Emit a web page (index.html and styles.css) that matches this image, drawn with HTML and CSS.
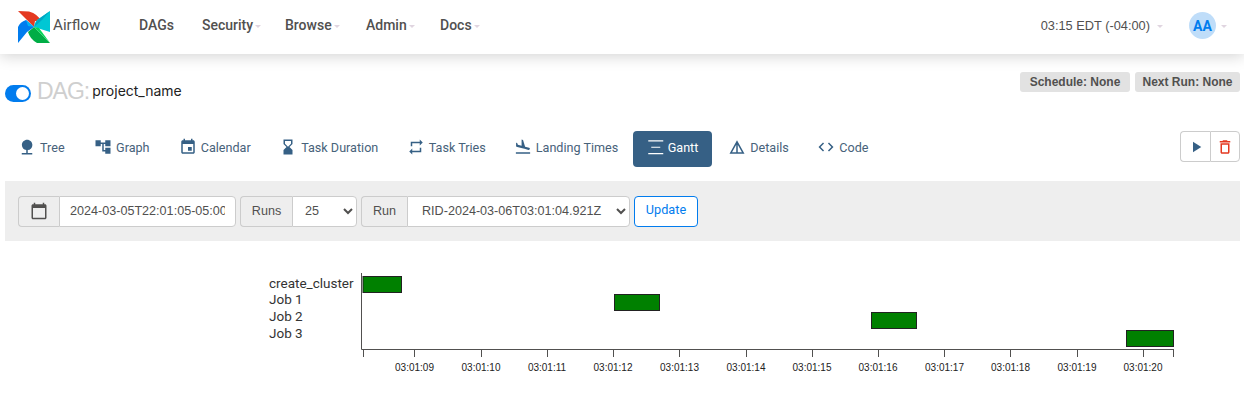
FILE: index.html
```html
<!DOCTYPE html>
<html lang="en">
<head>
<meta charset="utf-8">
<title>Airflow - Gantt</title>
<link rel="stylesheet" href="styles.css">
</head>
<body>
<header class="navbar">
  <a class="brand">
    <svg class="logo" viewBox="0 0 32 32" width="32" height="32" aria-hidden="true">
      <path fill="#e43921" d="M0 0 L11 .5 Q20 3 24 11 L17 10 L16 16 Z"/>
      <path fill="#00c7d4" d="M32 0 L32 21 L16 16 Q17 9 22 7 Z"/>
      <path fill="#00a7c4" d="M32 0 L22 7 Q18 10 16 16 L24 9 Z"/>
      <path fill="#00ad46" d="M32 32 L19 32 Q12 28 10 21 L16 16 Z"/>
      <path fill="#04d659" d="M32 32 L16 16 L21 17 Z"/>
      <path fill="#017cee" d="M0 32 L0 16 Q2 11 8 9 L16 16 L9 21 Z"/>
      <path fill="#00b4f5" d="M8 9 L16 16 L10 15 Z"/>
    </svg>
    <span class="brand-name">Airflow</span>
  </a>
  <nav class="menu">
    <a class="menu-item menu-dags">DAGs</a>
    <a class="menu-item menu-security">Security<i class="caret"></i></a>
    <a class="menu-item menu-browse">Browse<i class="caret"></i></a>
    <a class="menu-item menu-admin">Admin<i class="caret"></i></a>
    <a class="menu-item">Docs<i class="caret"></i></a>
  </nav>
  <div class="nav-right">
    <span class="clock">03:15 EDT (-04:00)<i class="caret clock-caret"></i></span>
    <span class="avatar">AA</span><i class="caret avatar-caret"></i>
  </div>
</header>

<main class="content">
  <section class="title-row">
    <div class="title">
      <span class="toggle"><span class="knob"></span></span>
      <span class="dag-label">DAG:</span>
      <span class="dag-name">project_name</span>
    </div>
    <div class="badges">
      <span class="badge badge-schedule">Schedule: None</span>
      <span class="badge badge-next">Next Run: None</span>
    </div>
  </section>

  <section class="tabs-row">
    <nav class="tabs">
      <a class="tab"><svg class="ico" viewBox="0 0 24 24"><path d="M13 16.120c3.470-.41 6.170-3.360 6.170-6.950 0-3.870-3.130-7-7-7s-7 3.130-7 7c0 3.470 2.520 6.340 5.830 6.890V20H5v2h14v-2h-6v-3.880z"/></svg>Tree</a>
      <a class="tab tab-graph"><svg class="ico" viewBox="0 0 24 24"><path d="M22 11V3h-7v3H9V3H2v8h7V8h2v10h4v3h7v-8h-7v3h-2V8h2v3z"/></svg>Graph</a>
      <a class="tab tab-cal"><svg class="ico" viewBox="0 0 24 24"><path d="M17 12h-5v5h5v-5zM16 1v2H8V1H6v2H5c-1.110 0-1.990.9-1.990 2L3 19c0 1.100.89 2 2 2h14c1.100 0 2-.9 2-2V5c0-1.100-.9-2-2-2h-1V1h-2zm3 18H5V8h14v11z"/></svg>Calendar</a>
      <a class="tab"><svg class="ico" viewBox="0 0 24 24"><path d="M18 22l-.01-6L14 12l3.990-4.010L18 2H6v6l4 4-4 3.990V22h12zM8 7.500V4h8v3.500l-4 4-4-4z"/></svg>Task Duration</a>
      <a class="tab"><svg class="ico" viewBox="0 0 24 24"><path d="M7 7h10v3l4-4-4-4v3H5v6h2V7zm10 10H7v-3l-4 4 4 4v-3h12v-6h-2v4z"/></svg>Task Tries</a>
      <a class="tab tab-land"><svg class="ico" viewBox="0 0 24 24"><path d="M2.500 19h19v2h-19v-2zm7.180-5.730l4.350 1.160 5.310 1.420c.8.210 1.620-.26 1.840-1.060.21-.8-.26-1.620-1.060-1.840l-5.310-1.420-2.760-9.020L10.120 2v8.280L5.150 8.950l-.93-2.320-1.450-.39v5.170l1.600.43 5.310 1.430z"/></svg>Landing Times</a>
      <a class="tab tab-active"><svg class="ico" viewBox="0 0 24 24"><path d="M3 3h20v1.500H3zM7 11.500h12V13H7zM3 20h20v1.500H3z"/></svg>Gantt</a>
      <a class="tab tab-details"><svg class="ico" viewBox="0 0 24 24"><path d="M12 3L2 21h20L12 3zm1 5.920L18.600 19H13V8.920zm-2 0V19H5.400L11 8.920z"/></svg>Details</a>
      <a class="tab"><svg class="ico" viewBox="0 0 24 24"><path d="M9.400 16.600L4.800 12l4.600-4.600L8 6l-6 6 6 6 1.400-1.400zm5.200 0l4.600-4.600-4.600-4.600L16 6l6 6-6 6-1.400-1.400z"/></svg>Code</a>
    </nav>
    <div class="actions">
      <button class="action" type="button"><svg class="ico-action" viewBox="0 0 24 24"><path fill="#366085" d="M8 5v14l11-7z"/></svg></button>
      <button class="action" type="button"><svg class="ico-action" viewBox="0 0 24 24"><path fill="#e43921" d="M6 19c0 1.100.9 2 2 2h8c1.100 0 2-.9 2-2V7H6v12zM8 9h8v10H8V9zm7.500-5l-1-1h-5l-1 1H5v2h14V4h-3.500z"/></svg></button>
    </div>
  </section>

  <form class="toolbar">
    <div class="group">
      <span class="addon addon-cal"><svg class="ico-action" viewBox="0 0 24 24"><path fill="#51504f" d="M20 3h-1V1h-2v2H7V1H5v2H4c-1.100 0-2 .9-2 2v16c0 1.100.9 2 2 2h16c1.100 0 2-.9 2-2V5c0-1.100-.9-2-2-2zm0 18H4V8h16v13z"/></svg></span>
      <input class="field field-date" type="text" value="2024-03-05T22:01:05-05:00">
    </div>
    <div class="group">
      <span class="addon addon-runs">Runs</span>
      <select class="field field-runs"><option>25</option></select>
    </div>
    <div class="group">
      <span class="addon addon-run">Run</span>
      <select class="field field-run"><option>RID-2024-03-06T03:01:04.921Z</option></select>
    </div>
    <button class="update" type="button">Update</button>
  </form>

  <section class="chart">
    <svg class="gantt" width="1244" height="145" viewBox="0 241 1244 145" role="img" aria-label="Gantt chart">
      <g class="row-labels">
        <text x="269" y="288">create_cluster</text>
        <text x="269" y="304">Job 1</text>
        <text x="269" y="321">Job 2</text>
        <text x="269" y="338">Job 3</text>
      </g>
      <g class="axis">
        <path d="M361.500 273V349.500H1173.500"/>
        <path d="M363.500 349v8M414.500 349v8M481.500 349v8M547.500 349v8M613.500 349v8M679.500 349v8M746.500 349v8M812.500 349v8M878.500 349v8M944.500 349v8M1010.500 349v8M1077.500 349v8M1143.500 349v8M1173.500 349v8"/>
      </g>
      <g class="bars">
        <rect x="363" y="276.500" width="38.500" height="16"/>
        <rect x="614.500" y="294.500" width="45" height="16"/>
        <rect x="871.500" y="312.500" width="45" height="16"/>
        <rect x="1126.500" y="330.500" width="47" height="16"/>
      </g>
      <g class="tick-labels">
        <text x="414.500" y="371">03:01:09</text>
        <text x="481" y="371">03:01:10</text>
        <text x="547" y="371">03:01:11</text>
        <text x="613" y="371">03:01:12</text>
        <text x="679.500" y="371">03:01:13</text>
        <text x="746" y="371">03:01:14</text>
        <text x="812" y="371">03:01:15</text>
        <text x="878" y="371">03:01:16</text>
        <text x="944.500" y="371">03:01:17</text>
        <text x="1010.500" y="371">03:01:18</text>
        <text x="1077" y="371">03:01:19</text>
        <text x="1143" y="371">03:01:20</text>
      </g>
    </svg>
  </section>
</main>
</body>
</html>
```
FILE: styles.css
```css
* { box-sizing: border-box; }
html, body { margin: 0; padding: 0; background: #fff; }
body {
  width: 1244px;
  height: 409px;
  overflow: hidden;
  font-family: Roboto, "Liberation Sans", sans-serif;
  color: #51504f;
}
a { color: inherit; text-decoration: none; }

.navbar {
  height: 54px;
  display: flex;
  align-items: center;
  background: #fff;
  box-shadow: 0 2px 14px rgba(0, 0, 0, .18);
  padding: 0 0 4px 18px;
  position: relative;
}
.brand { display: flex; align-items: center; width: 121px; }
.logo { display: block; margin-top: 4px; }
.brand-name { font-size: 15.200px; margin-left: 3px; color: #51504f; }
.menu { display: flex; font-size: 14px; font-weight: 500; }
.menu-item { display: flex; align-items: center; }
.menu-dags { width: 63px; }
.menu-security { width: 83px; }
.menu-browse { width: 81px; }
.menu-admin { width: 74px; }
.caret {
  display: inline-block;
  width: 0;
  height: 0;
  margin-left: 2px;
  margin-top: 2px;
  border-top: 3px solid #e0d5e0;
  border-left: 3px solid transparent;
  border-right: 3px solid transparent;
}
.nav-right { margin-left: auto; display: flex; align-items: center; padding-right: 17px; }
.clock { font-family: "Liberation Sans", sans-serif; font-size: 12.800px; display: flex; align-items: center; }
.clock-caret { margin-left: 7px; }
.avatar {
  width: 27px;
  height: 27px;
  margin-left: 26px;
  margin-top: 1px;
  border-radius: 50%;
  background: #bfddf9;
  color: #017cee;
  font-size: 14px;
  font-weight: 700;
  display: flex;
  align-items: center;
  justify-content: center;
}
.avatar-caret { margin-left: 5px; }

.content { padding: 0 4px 0 5px; }
.title-row { display: flex; justify-content: space-between; align-items: flex-start; height: 77px; padding-top: 18px; }
.title { display: flex; align-items: center; margin-top: 8px; height: 24px; }
.toggle {
  width: 26px;
  height: 17px;
  background: #017cee;
  border-radius: 9px;
  position: relative;
  margin-top: 3px;
}
.knob {
  position: absolute;
  right: 2px;
  top: 2px;
  width: 13px;
  height: 13px;
  background: #fff;
  border-radius: 50%;
}
.dag-label { font-family: "Liberation Sans", sans-serif; font-size: 23px; color: #cfcfcf; margin-left: 6px; margin-top: -2px; letter-spacing: -1px; }
.dag-name { font-family: Inter, Roboto, sans-serif; font-size: 14px; color: #222; margin-left: 3px; margin-top: -4px; }
.badges { display: flex; gap: 5px; }
.badge {
  height: 20px;
  display: flex;
  align-items: center;
  justify-content: center;
  background: #e2e2e2;
  border-radius: 3px;
  font-family: "Liberation Sans", sans-serif;
  font-size: 12px;
  font-weight: 700;
  color: #51504f;
}
.badge-schedule { width: 110px; }
.badge-next { width: 105px; }

.tabs-row { display: flex; justify-content: space-between; align-items: flex-start; height: 50px; }
.tabs { display: flex; gap: 2.500px; font-size: 12.600px; color: #47627a; }
.tab {
  display: flex;
  align-items: center;
  height: 36px;
  padding: 0 13px 4px;
  border-radius: 4px;
  white-space: nowrap;
}
.tab-graph { margin-left: 1px; }
.tab-cal { margin-left: .7px; }
.tab-land { margin-left: -.5px; }
.tab-active { background: #366085; color: #fff; margin-left: -1px; width: 79px; }
.tab-details { margin-left: 1px; }
.ico { width: 18px; height: 18px; margin-right: 4px; fill: #366085; flex: none; }
.tab-active .ico { fill: #fff; }
.ico-action { width: 18px; height: 18px; display: block; }
.actions { display: flex; height: 31px; }
.action {
  width: 30px;
  height: 31px;
  padding: 0;
  background: #fff;
  border: 1px solid #ccc;
  display: flex;
  align-items: center;
  justify-content: center;
}
.action:first-child { border-radius: 4px 0 0 4px; border-right: 0; }
.action:last-child { border-radius: 0 4px 4px 0; }

.toolbar {
  height: 60px;
  background: #eee;
  display: flex;
  align-items: flex-start;
  gap: 4px;
  padding: 15px 0 0 13px;
  font-family: "Liberation Sans", sans-serif;
  font-size: 12.600px;
}
.group { display: flex; height: 31px; }
.addon {
  display: flex;
  align-items: center;
  justify-content: center;
  height: 31px;
  padding-bottom: 2px;
  background: #eee;
  border: 1px solid #ccc;
  border-right: 0;
  border-radius: 4px 0 0 4px;
  color: #51504f;
}
.addon-cal { width: 41px; }
.addon-runs { width: 52px; }
.addon-run { width: 46px; }
.field {
  height: 31px;
  background: #fff;
  border: 1px solid #ccc;
  border-radius: 0 4px 4px 0;
  font-family: "Liberation Sans", sans-serif;
  font-size: 12.600px;
  color: #51504f;
  outline: 0;
}
.field-date { width: 177px; padding: 0 10px 2px; }
.field-runs { width: 65px; padding: 0 8px 1px; }
.field-run { width: 223px; padding: 0 10px 1px; }
.update {
  width: 64px;
  height: 31px;
  background: #fff;
  border: 1px solid #017cee;
  border-radius: 4px;
  color: #017cee;
  font-family: Roboto, sans-serif;
  font-size: 12.700px;
  padding: 0 0 4px;
}

.chart { margin-left: -5px; }
.gantt { display: block; }
.row-labels { font-family: Roboto, sans-serif; font-size: 13.500px; fill: #333; }
.axis path { fill: none; stroke: #51504f; stroke-width: 1; }
.bars rect { fill: #008000; stroke: #222; stroke-width: 1; }
.tick-labels { font-family: "Liberation Sans", sans-serif; font-size: 10px; fill: #222; text-anchor: middle; }
```
